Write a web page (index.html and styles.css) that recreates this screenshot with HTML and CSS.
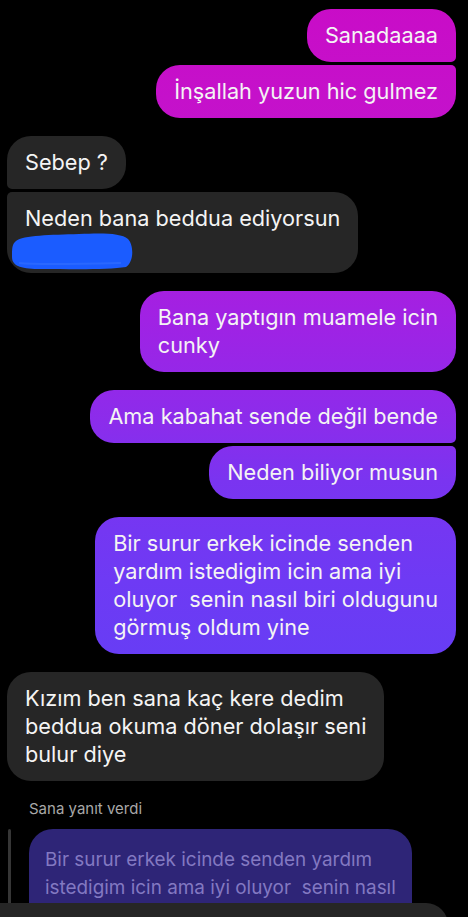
FILE: index.html
```html
<!DOCTYPE html>
<html lang="tr">
<head>
  <meta charset="UTF-8" />
  <title>Sohbet</title>
  <link rel="stylesheet" href="styles.css">
</head>
<body>
  <div class="chat">
    <div class="row me first-row">
      <div class="bubble sent top">Sanadaaaa</div>
    </div>
    <div class="row me tight">
      <div class="bubble sent bottom">İnşallah yuzun hic gulmez</div>
    </div>

    <div class="row them">
      <div class="bubble recv top">Sebep ?</div>
    </div>
    <div class="row them tight">
      <div class="bubble recv bottom">
        Neden bana beddua ediyorsun
        <div class="scribble">
          <svg width="126" height="40" viewBox="0 0 126 40">
            <path d="M7 9 C14 3 42 3 70 2 C94 1 112 1 119 7 C125 13 125 30 117 35 C100 38 62 37 32 37 C14 37 3 35 3 25 C3 17 3 12 7 9 Z" fill="#1b5cff"/>
            <path d="M10 31 C30 33 70 32 112 31" stroke="#2a68ff" stroke-width="2" fill="none"/>
          </svg>
        </div>
      </div>
    </div>

    <div class="row me">
      <div class="bubble sent">Bana yaptıgın muamele icin<br>cunky</div>
    </div>

    <div class="row me">
      <div class="bubble sent top">Ama kabahat sende değil bende</div>
    </div>
    <div class="row me tight">
      <div class="bubble sent bottom">Neden biliyor musun</div>
    </div>

    <div class="row me">
      <div class="bubble sent">Bir surur erkek icinde senden<br>yardım istedigim icin ama iyi<br>oluyor&nbsp; senin nasıl biri oldugunu<br>görmuş oldum yine</div>
    </div>

    <div class="row them">
      <div class="bubble recv">Kızım ben sana kaç kere dedim<br>beddua okuma döner dolaşır seni<br>bulur diye</div>
    </div>

    <p class="reply-label">Sana yanıt verdi</p>
    <div class="reply">
      <div class="reply-line"></div>
      <div class="reply-bubble">Bir surur erkek icinde senden yardım<br>istedigim icin ama iyi oluyor&nbsp; senin nasıl</div>
    </div>
  </div>

  <div class="composer"></div>
</body>
</html>
```

FILE: styles.css
```css
html, body {
  height: 100%;
}
body {
  background-color: #000;
  font-family: 'Inter', 'Noto Sans', sans-serif;
  margin: 0;
  overflow: hidden;
  position: relative;
  color: #f4f4f4;
}
.chat {
  display: flex;
  flex-direction: column;
  padding: 0 12px 0 7px;
}
.row {
  display: flex;
  margin-top: 18px;
}
.row.first-row { margin-top: 9px; }
.row.tight { margin-top: 3px; }
.row.me { justify-content: flex-end; }
.row.them { justify-content: flex-start; }

.bubble {
  font-size: 21.7px;
  line-height: 28px;
  padding: 12px 18px 13px;
  border-radius: 24px;
  white-space: nowrap;
}
.bubble.sent {
  background: linear-gradient(180deg, #c90cc7 0px, #c412cb 120px, #a022e4 320px, #8c2ceb 420px, #7a34f0 480px, #6e3af4 580px, #673df5 660px, #5f3ff6 917px);
  background-attachment: fixed;
}
.bubble.recv {
  background-color: #262626;
}
.bubble.sent.top { border-bottom-right-radius: 5px; }
.bubble.sent.bottom { border-top-right-radius: 5px; }
.bubble.recv.top { border-bottom-left-radius: 5px; }
.bubble.recv.bottom { border-top-left-radius: 5px; }

.scribble {
  height: 28px;
}
.scribble svg {
  display: block;
  margin: 0 0 0 -16px;
}

.reply-label {
  margin: 18px 0 0 22px;
  font-size: 15px;
  line-height: 20px;
  color: #a8a8a8;
}
.reply {
  display: flex;
  gap: 18px;
  margin-top: 10px;
}
.reply-line {
  width: 3px;
  margin-left: 1px;
  background-color: #363636;
  border-radius: 2px;
  height: 120px;
}
.reply-bubble {
  background-color: #2e2577;
  color: #8379c2;
  font-size: 18.9px;
  line-height: 28px;
  padding: 17px 16px 40px;
  border-radius: 24px;
  white-space: nowrap;
}

.composer {
  position: absolute;
  left: 0;
  top: 903px;
  width: 448px;
  height: 40px;
  background-color: #262626;
  border-top-right-radius: 22px;
}
```
